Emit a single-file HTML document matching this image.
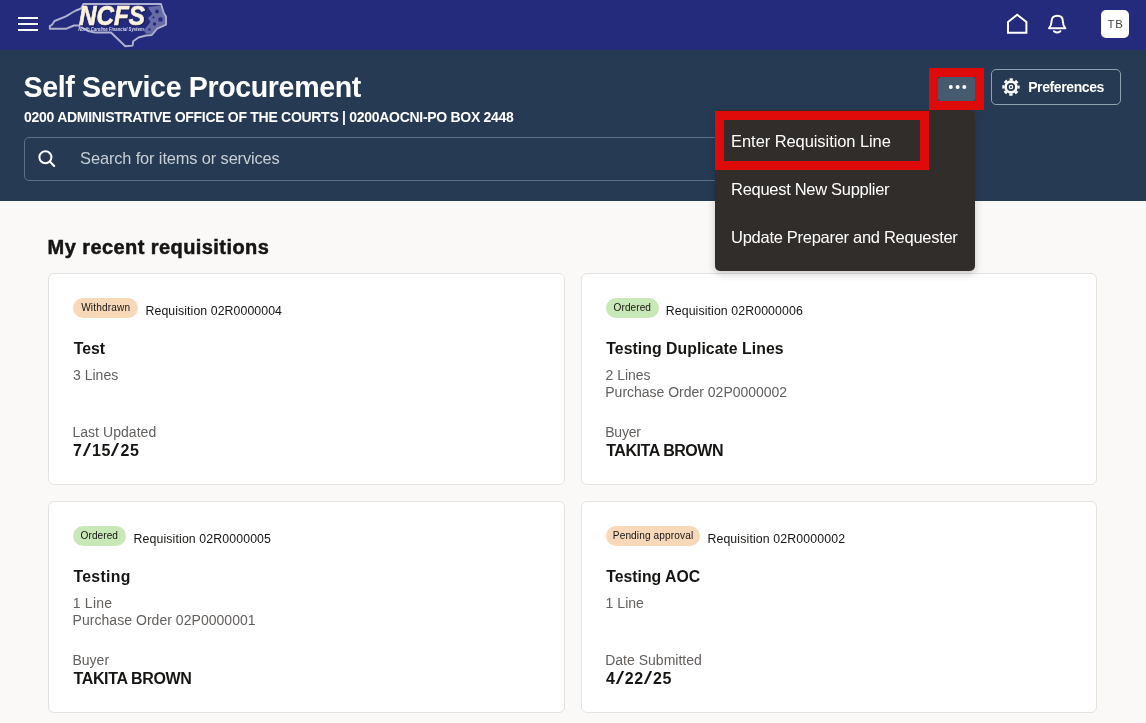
<!DOCTYPE html>
<html lang="en">
<head>
<meta charset="utf-8">
<title>Self Service Procurement</title>
<style>
*{box-sizing:border-box;margin:0;padding:0}
html,body{width:1146px;height:723px;overflow:hidden}
body{background:#fbf9f8;font-family:"Liberation Sans",sans-serif;color:#161513;position:relative}
.abs{position:absolute}
#topbar{left:0;top:0;width:1146px;height:48px;background:#252b7c}
#hdr{left:0;top:48px;width:1146px;height:153px;background:#263b53}
.t{position:absolute;white-space:nowrap;line-height:1}
.title{font-weight:700;color:#fff}
.sub{font-weight:700;color:#fff}
.ph{color:#c9cfd6}
.preft{font-weight:700;color:#fff}
.h2{font-weight:700;color:#161513;-webkit-text-stroke:0.500px #161513}
.tb{color:#4a4743}
.bt{color:#161513}
.req{color:#161513}
.ct{font-weight:700;color:#161513}
.g{color:#625f5d}
.sl{display:inline-block;font-weight:400;transform:scale(1.900,1.200);transform-origin:50% 75%;margin:0 2.200px}
.v{font-weight:700;color:#161513}
.mi{color:#fff}
#search{left:24px;top:137px;width:760px;height:44px;border:1px solid #5f7186;border-radius:5px}
.card{position:absolute;width:517px;height:212px;background:#fff;border:1px solid #e5e3e0;border-radius:6px}
.badge{position:absolute;height:20px;border-radius:10px}
.b-o{background:#f7d9b9}
.b-g{background:#c9e8b8}
#menu{left:715px;top:110px;width:260px;height:161px;background:#312d2a;border-radius:5px;box-shadow:0 3px 8px rgba(0,0,0,.2)}
.red{position:absolute;border:9px solid #df0a0a}
#dots{left:938px;top:77px;width:37px;height:24px;background:#465a70;border-radius:3px}
#pref{left:991px;top:69px;width:130px;height:36px;border:1px solid #8fa0b1;border-radius:5px}
#avatar{left:1101px;top:10px;width:28px;height:28px;background:#fff;border-radius:5px}
</style>
</head>
<body>
<div id="topbar" class="abs"></div>
<div id="hdr" class="abs"></div>
<div class="abs" style="left:0;top:48px;width:1146px;height:3px;background:linear-gradient(#252b7c 0%,#252b7c 25%,#263b53 100%)"></div>

<!-- hamburger -->
<svg class="abs" style="left:17px;top:14px" width="22" height="20" viewBox="0 0 22 20"><g stroke="#fff" stroke-width="2"><path d="M1 4h20M1 10h20M1 16h20"/></g></svg>

<!-- logo -->
<svg class="abs" style="left:0;top:0;will-change:transform" width="200" height="48" viewBox="0 0 200 48">
<path d="M83.400 4 L81.200 8.500 L75.900 10.500 L71.900 12.800 L65.900 16.400 L54.600 21 L52 24.800 L49.800 26 L49.800 28.800 L65.900 28.800 L73.900 25.500 L78.500 25.500 L88 31 L95 32.500 L111 32.500 L125.300 46.300 L132.600 45.600 L133.200 41.200 L138.500 37.500 L146 35.500 L151.800 35 L157.100 28.600 L166 24.600 L166 16.600 L163.800 13.300 L161 4 Z" fill="none" stroke="#b0b2d2" stroke-width="1.900" stroke-linejoin="round"/>
<path d="M148 7 L160 5.500 L163 10 L165 17 L165.500 24 L158 28 L152 34 L146 33.500 L143.500 30 L147 26.500 L150.500 22 L148 18 L152.500 14 L149.500 10 Z" fill="#9497c4" opacity="0.600"/>
<g fill="#262c7c"><circle cx="157" cy="11.500" r="2"/><circle cx="160.500" cy="19.500" r="2.300"/><circle cx="154.500" cy="24" r="1.700"/><circle cx="149.500" cy="29.500" r="1.200"/><circle cx="153.500" cy="17.500" r="1.100"/></g>
<text x="80" y="26.200" font-family="Liberation Sans, sans-serif" font-size="26.800" font-weight="700" font-style="italic" fill="#1b1d58" stroke="#1b1d58" stroke-width="0.800" textLength="66" lengthAdjust="spacingAndGlyphs">NCFS</text>
<text x="79" y="25.200" font-family="Liberation Sans, sans-serif" font-size="26.800" font-weight="700" font-style="italic" fill="#fbf3dc" stroke="#fbf3dc" stroke-width="0.700" textLength="66" lengthAdjust="spacingAndGlyphs">NCFS</text>
<text x="78.200" y="30.600" font-family="Liberation Sans, sans-serif" font-size="4.500" font-weight="700" font-style="italic" fill="#d5d7ea" textLength="65.500" lengthAdjust="spacingAndGlyphs">North Carolina Financial System</text>
</svg>

<!-- home, bell -->
<svg class="abs" style="left:1000px;top:0" width="80" height="48" viewBox="1000 0 80 48">
<path d="M1008 22 L1017.200 14.800 L1026.400 22 V32.800 H1008 Z" fill="none" stroke="#fff" stroke-width="2" stroke-linejoin="miter"/>
<path d="M1049 28.300 C1051 26 1051.600 24 1051.600 21 C1051.600 17.500 1054 15.700 1057.200 15.700 C1060.400 15.700 1062.800 17.500 1062.800 21 C1062.800 24 1063.400 26 1065.400 28.300 Z" fill="none" stroke="#fff" stroke-width="2" stroke-linejoin="round"/>
<path d="M1054 31.200 Q1057.200 33.800 1060.400 31.200" fill="none" stroke="#fff" stroke-width="2" stroke-linecap="round"/>
</svg>
<div id="avatar" class="abs"></div>

<div id="search" class="abs"></div>
<svg class="abs" style="left:36px;top:147px" width="24" height="24" viewBox="36 147 24 24"><circle cx="45.400" cy="157.200" r="6" fill="none" stroke="#fff" stroke-width="2"/><path d="M49.800 161.600 L54.200 166" stroke="#fff" stroke-width="2.100" stroke-linecap="round"/></svg>

<!-- prefs -->
<div id="pref" class="abs"></div>
<svg class="abs" style="left:1000.600px;top:77px" width="20" height="20" viewBox="0 0 20 20"><circle cx="10" cy="10" r="5.400" fill="none" stroke="#fff" stroke-width="2.600"/><circle cx="10" cy="10" r="7.600" fill="none" stroke="#fff" stroke-width="2.200" stroke-dasharray="3.300 2.669" stroke-dashoffset="1.650"/><circle cx="10" cy="10" r="1.700" fill="none" stroke="#fff" stroke-width="1.200"/></svg>

<!-- cards -->
<div class="card" style="left:48px;top:273px"></div>
<div class="card" style="left:581px;top:273px;width:516px"></div>
<div class="card" style="left:48px;top:501px"></div>
<div class="card" style="left:581px;top:501px;width:516px"></div>
<div class="badge b-o" style="left:73px;top:298px;width:65px"></div>
<div class="badge b-g" style="left:606px;top:298px;width:52.500px"></div>
<div class="badge b-g" style="left:73px;top:526px;width:52.500px"></div>
<div class="badge b-o" style="left:606px;top:526px;width:94px"></div>

<!-- menu -->
<div id="menu" class="abs"></div>

<div id="texts" style="position:absolute;left:0;top:0;width:1146px;height:723px;will-change:transform">
<div id="title" class="t title" style="left:23.57px;top:72.99px;font-size:28.6px;letter-spacing:-0.379px">Self Service Procurement</div>
<div id="sub" class="t sub" style="left:24.12px;top:110.15px;font-size:14px;letter-spacing:-0.290px">0200 ADMINISTRATIVE OFFICE OF THE COURTS | 0200AOCNI-PO BOX 2448</div>
<div id="ph" class="t ph" style="left:80.10px;top:150.12px;font-size:16.4px;letter-spacing:-0.127px">Search for items or services</div>
<div id="preft" class="t preft" style="left:1028.17px;top:80.15px;font-size:14px;letter-spacing:-0.395px">Preferences</div>
<div id="h2" class="t h2" style="left:47.57px;top:237.07px;font-size:20px;letter-spacing:0.428px">My recent requisitions</div>
<div id="tb" class="t tb" style="left:1107.62px;top:18.95px;font-size:11.4px;letter-spacing:0.784px">TB</div>
<div id="b1" class="t bt" style="left:81.14px;top:303.45px;font-size:10.1px;letter-spacing:0.167px">Withdrawn</div>
<div id="r1" class="t req" style="left:145.52px;top:304.59px;font-size:12.3px;letter-spacing:0.082px">Requisition 02R0000004</div>
<div id="c1" class="t ct" style="left:73.67px;top:340.63px;font-size:15.8px;letter-spacing:0.049px">Test</div>
<div id="l1" class="t g" style="left:72.95px;top:368.25px;font-size:14px;letter-spacing:0.027px">3 Lines</div>
<div id="u1" class="t g" style="left:72.40px;top:425.15px;font-size:14px;letter-spacing:0.049px">Last Updated</div>
<div id="v1" class="t v" style="left:73.06px;top:442.76px;font-size:16px;letter-spacing:0.615px">7<span class="sl">/</span>15<span class="sl">/</span>25</div>
<div id="b2" class="t bt" style="left:613.62px;top:303.45px;font-size:10.1px;letter-spacing:0.043px">Ordered</div>
<div id="r2" class="t req" style="left:665.77px;top:304.59px;font-size:12.3px;letter-spacing:0.109px">Requisition 02R0000006</div>
<div id="c2" class="t ct" style="left:606.33px;top:340.63px;font-size:15.8px;letter-spacing:0.051px">Testing Duplicate Lines</div>
<div id="l2" class="t g" style="left:605.62px;top:368.25px;font-size:14px;letter-spacing:-0.030px">2 Lines</div>
<div id="p2" class="t g" style="left:605.31px;top:385.15px;font-size:14px;letter-spacing:-0.012px">Purchase Order 02P0000002</div>
<div id="u2" class="t g" style="left:605.17px;top:425.15px;font-size:14px;letter-spacing:-0.182px">Buyer</div>
<div id="v2" class="t v" style="left:606.18px;top:442.76px;font-size:16px;letter-spacing:-0.449px">TAKITA BROWN</div>
<div id="b3" class="t bt" style="left:80.62px;top:531.45px;font-size:10.1px;letter-spacing:0.043px">Ordered</div>
<div id="r3" class="t req" style="left:133.58px;top:532.59px;font-size:12.3px;letter-spacing:0.127px">Requisition 02R0000005</div>
<div id="c3" class="t ct" style="left:73.38px;top:568.63px;font-size:15.8px;letter-spacing:0.325px">Testing</div>
<div id="l3" class="t g" style="left:72.71px;top:596.25px;font-size:14px;letter-spacing:0.248px">1 Line</div>
<div id="p3" class="t g" style="left:72.60px;top:613.15px;font-size:14px;letter-spacing:0.038px">Purchase Order 02P0000001</div>
<div id="u3" class="t g" style="left:72.40px;top:653.15px;font-size:14px;letter-spacing:0.028px">Buyer</div>
<div id="v3" class="t v" style="left:73.50px;top:670.76px;font-size:16px;letter-spacing:-0.360px">TAKITA BROWN</div>
<div id="b4" class="t bt" style="left:612.81px;top:531.45px;font-size:10.1px;letter-spacing:0.121px">Pending approval</div>
<div id="r4" class="t req" style="left:707.38px;top:532.59px;font-size:12.3px;letter-spacing:0.142px">Requisition 02R0000002</div>
<div id="c4" class="t ct" style="left:606.28px;top:568.63px;font-size:15.8px;letter-spacing:-0.009px">Testing AOC</div>
<div id="l4" class="t g" style="left:605.59px;top:596.25px;font-size:14px;letter-spacing:0.033px">1 Line</div>
<div id="u4" class="t g" style="left:605.17px;top:653.15px;font-size:14px;letter-spacing:0.013px">Date Submitted</div>
<div id="v4" class="t v" style="left:606.07px;top:670.76px;font-size:16px;letter-spacing:0.528px">4<span class="sl">/</span>22<span class="sl">/</span>25</div>
<div id="m1" class="t mi" style="left:731.10px;top:133.13px;font-size:16.5px;letter-spacing:-0.078px">Enter Requisition Line</div>
<div id="m2" class="t mi" style="left:731.10px;top:181.03px;font-size:16.5px;letter-spacing:-0.303px">Request New Supplier</div>
<div id="m3" class="t mi" style="left:731.10px;top:229.23px;font-size:16.5px;letter-spacing:-0.289px">Update Preparer and Requester</div>
</div>

<!-- dots button & red highlights -->
<div id="dots" class="abs"></div>
<svg class="abs" style="left:946px;top:83px" width="22" height="8" viewBox="946 83 22 8"><circle cx="950.800" cy="87.100" r="2" fill="#fff"/><circle cx="957.600" cy="87.100" r="2" fill="#fff"/><circle cx="964.300" cy="87.100" r="2" fill="#fff"/></svg>
<div class="red" style="left:929px;top:68px;width:55px;height:42px"></div>
<div class="red" style="left:715px;top:111px;width:214px;height:59px"></div>
</body>
</html>
